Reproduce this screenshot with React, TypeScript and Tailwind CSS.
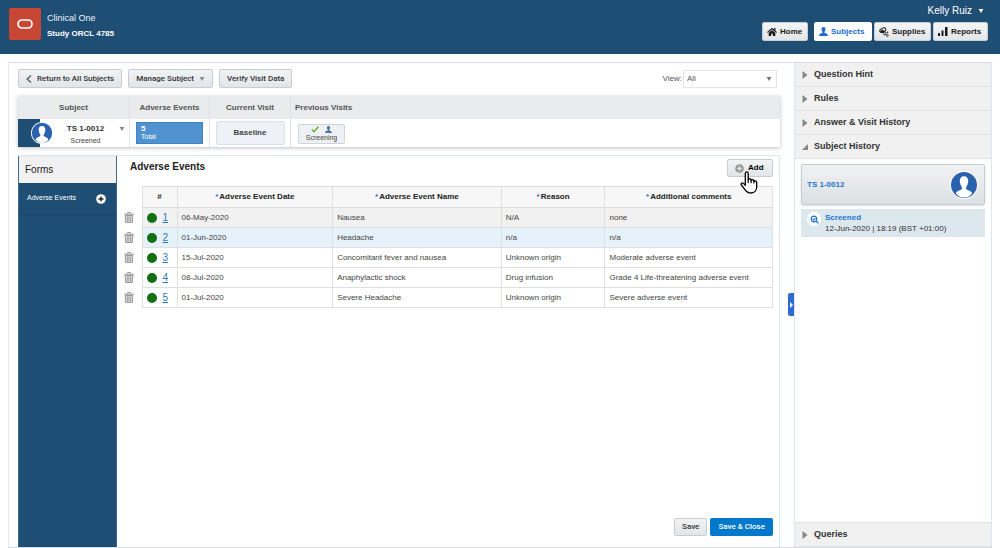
import { useState } from "react";
import { FaHome } from "react-icons/fa";

interface AdverseEvent {
  id: number;
  date: string;
  name: string;
  reason: string;
  comments: string;
}

const events: AdverseEvent[] = [
  { id: 1, date: "06-May-2020", name: "Nausea", reason: "N/A", comments: "none" },
  { id: 2, date: "01-Jun-2020", name: "Headache", reason: "n/a", comments: "n/a" },
  { id: 3, date: "15-Jul-2020", name: "Concomitant fever and nausea", reason: "Unknown origin", comments: "Moderate adverse event" },
  { id: 4, date: "08-Jul-2020", name: "Anaphylactic shock", reason: "Drug infusion", comments: "Grade 4 Life-threatening adverse event" },
  { id: 5, date: "01-Jul-2020", name: "Severe Headache", reason: "Unknown origin", comments: "Severe adverse event" },
];

const columns = ["Adverse Event Date", "Adverse Event Name", "Reason", "Additional comments"];

const greyButton =
  "flex items-center rounded-xs border border-[#c9cdd1] bg-linear-to-b from-[#f1f3f4] to-[#e2e6e9] text-[#333]";

function Caret({ className }: { className: string }) {
  return (
    <svg viewBox="0 0 6 5" className={`h-1 w-[6px] ${className}`} fill="currentColor" aria-hidden="true">
      <path d="M0 0h6L3 5z" />
    </svg>
  );
}

function Avatar({ className }: { className: string }) {
  return (
    <svg viewBox="0 0 28 28" className={className} aria-hidden="true">
      <circle cx="14" cy="14" r="14" fill="#fff" />
      <circle cx="14" cy="14" r="13" fill="#2a62b0" />
      <path
        d="M14 5.200c-2.900 0-4.300 2.100-4.200 4.900 0 1 .1 1.600.4 2.200.3 1.700.9 2.800 1.700 3.600v2c-.6 1.100-4.700 1.500-6.200 4.300C7.800 25 10.700 26.600 14 26.600s6.200-1.600 8.300-4.400c-1.500-2.800-5.600-3.200-6.200-4.300v-2c.8-.8 1.400-1.900 1.700-3.600.3-.6.4-1.200.4-2.200.1-2.800-1.300-4.900-4.200-4.900z"
        fill="#fff"
      />
    </svg>
  );
}

function PersonIcon({ className }: { className: string }) {
  return (
    <svg viewBox="0 0 9 9" className={className} fill="currentColor" aria-hidden="true">
      <path d="M4.500 0C3.200 0 2.500.9 2.500 2.200c0 1 .4 2 1 2.500v1C2.800 6.300.3 6.200.3 8.200V9h8.400v-.8c0-2-2.500-1.900-3.200-2.500v-1c.6-.5 1-1.500 1-2.500C6.500.9 5.800 0 4.500 0z" />
    </svg>
  );
}

function SuppliesIcon() {
  return (
    <svg viewBox="0 0 10 10" className="size-[10px]" fill="none" stroke="#1a1a1a" aria-hidden="true">
      <ellipse cx="3.800" cy="3.200" rx="3.200" ry="2" transform="rotate(-25 3.800 3.200)" strokeWidth="1" />
      <path d="M1 4l3-1.500 1.500 2.200-3.500.8z" fill="#1a1a1a" stroke="none" />
      <circle cx="5.700" cy="6.500" r="1.300" strokeWidth=".9" />
      <circle cx="8.500" cy="5.200" r=".8" fill="#1a1a1a" stroke="none" />
      <circle cx="8.300" cy="8.400" r="1" strokeWidth=".8" />
    </svg>
  );
}

function ReportsIcon() {
  return (
    <svg viewBox="0 0 10 9" className="h-[9px] w-[10px]" fill="#1a1a1a" aria-hidden="true">
      <path d="M0 6h2v3H0zM3.500 3.500h2V9h-2zM7 0h2.500v9H7z" />
    </svg>
  );
}

function PlusCircle({ className, plus }: { className: string; plus: string }) {
  return (
    <svg viewBox="0 0 10 10" className={className} aria-hidden="true">
      <circle cx="5" cy="5" r="4.800" fill="currentColor" />
      <path d="M5 2.500v5M2.500 5h5" stroke={plus} strokeWidth="1.400" />
    </svg>
  );
}

function HandPointer() {
  return (
    <svg viewBox="0 0 18 23" className="absolute top-3 left-[13px] z-10 h-[23px] w-[18px]" aria-hidden="true">
      <path
        d="M5.300 2.600c0-2.200 2.900-2.200 2.900 0v6.200c.1-1.500 2.800-1.500 2.900.2v.7c.2-1.400 2.700-1.300 2.800.2v.8c.3-1.200 2.800-1.100 2.800.8v4.300c0 3.300-2 6.200-5.700 6.200-3.300 0-4.700-1.400-6.200-3.700L1.400 14c-1-1.500.8-2.900 2.100-1.600l1.800 2z"
        fill="#fff"
        stroke="#000"
        strokeWidth="1.300"
        strokeLinejoin="round"
      />
      <path d="M8.200 8.500v3.500M11.100 9v3.200M13.900 10v2.600" stroke="#000" strokeWidth="1.100" />
    </svg>
  );
}

function Header() {
  const navButton = "flex h-[19px] items-center gap-[3px] rounded-xs border px-1 text-[8px] font-bold";
  const idle = "border-[#c9cdd1] bg-linear-to-b from-[#f4f5f6] to-[#e3e6e9] text-[#1a1a1a]";
  return (
    <header className="flex h-[54px] shrink-0 justify-between bg-[#1f4e75] pr-3 pl-[9px] text-white">
      <div className="flex items-start gap-[6px] pt-2">
        <div className="flex size-8 items-center justify-center rounded-xs bg-[#c74634]">
          <svg viewBox="0 0 16 10" className="h-[10px] w-4" fill="none" stroke="#fff" strokeWidth="1.700" aria-hidden="true">
            <rect x="1" y="1" width="14" height="8" rx="4" />
          </svg>
        </div>
        <div className="flex flex-col gap-1 pt-1">
          <span className="text-[9px] leading-3 text-[#eef4f9]">Clinical One</span>
          <span className="text-[8px] leading-3 font-bold">Study ORCL 4785</span>
        </div>
      </div>
      <div className="flex flex-col items-end gap-1 pt-1">
        <button className="mr-1 flex items-center gap-[6px] text-[10px] leading-[14px]">
          Kelly Ruiz
          <Caret className="text-white" />
        </button>
        <nav className="flex gap-[2px]">
          <button className={`${navButton} ${idle} mr-1 w-[46px]`}>
            <FaHome className="size-[10px]" />
            Home
          </button>
          <button className={`${navButton} w-[58px] border-white bg-white text-[#1c6ccc]`}>
            <PersonIcon className="size-[9px]" />
            Subjects
          </button>
          <button className={`${navButton} ${idle} w-[57px]`}>
            <SuppliesIcon />
            Supplies
          </button>
          <button className={`${navButton} ${idle} w-[55px]`}>
            <ReportsIcon />
            Reports
          </button>
        </nav>
      </div>
    </header>
  );
}

function Toolbar() {
  return (
    <div className="flex h-[19px] items-center justify-between text-[8px]">
      <div className="flex gap-[6px] font-[Roboto] font-medium">
        <button className={`${greyButton} h-[19px] gap-[5px] px-[7px]`}>
          <svg viewBox="0 0 6 8" className="h-2 w-[6px]" fill="none" stroke="#666" strokeWidth="1.500" aria-hidden="true">
            <path d="M5 .5L1.200 4 5 7.500" />
          </svg>
          Return to All Subjects
        </button>
        <button className={`${greyButton} h-[19px] gap-[5px] px-[7px]`}>
          Manage Subject
          <Caret className="text-[#888]" />
        </button>
        <button className={`${greyButton} h-[19px] px-[7px]`}>Verify Visit Data</button>
      </div>
      <div className="mr-[3px] flex items-center gap-px text-[#555]">
        <label htmlFor="view">View:</label>
        <div className="relative">
          <select id="view" className="h-[18px] w-[94px] appearance-none border border-[#e3e6e8] bg-white pl-[3px] text-[8px]">
            <option>All</option>
          </select>
          <Caret className="pointer-events-none absolute top-[7px] right-[5px] text-[#777]" />
        </div>
      </div>
    </div>
  );
}

function SubjectBar() {
  const heading = "flex h-[23px] items-center justify-center bg-[#e9ebed] text-[8px] font-bold text-[#555]";
  const body = "flex h-7 items-center";
  return (
    <section className="flex bg-white shadow-[0_1px_4px_rgba(0,0,0,0.25)]">
      <div className="w-[112px] border-r border-[#dfe2e5]">
        <div className={heading}>Subject</div>
        <div className={body}>
          <div className="flex h-7 w-[22px] shrink-0 items-center bg-[#1f4e75] pl-[13px]">
            <Avatar className="size-[22px] shrink-0" />
          </div>
          <div className="ml-3 flex grow flex-col items-center pt-[3px] leading-3">
            <span className="text-[8px] font-bold text-[#333]">TS 1-0012</span>
            <span className="text-[7px] text-[#444]">Screened</span>
          </div>
          <button aria-label="Switch subject" className="mr-1 mb-2">
            <Caret className="text-[#888]" />
          </button>
        </div>
      </div>
      <div className="w-20 border-r border-[#dfe2e5]">
        <div className={heading}>Adverse Events</div>
        <div className={`${body} justify-center`}>
          <button className="flex h-[22px] w-[67px] flex-col justify-center border border-[#4183c0] bg-[#5193d1] pl-1 text-left leading-2 text-white">
            <span className="text-[8px] font-bold">5</span>
            <span className="text-[7px]">Total</span>
          </button>
        </div>
      </div>
      <div className="w-[81px] border-r border-[#dfe2e5]">
        <div className={heading}>Current Visit</div>
        <div className={`${body} justify-center`}>
          <button className="h-6 w-[69px] rounded-xs border border-[#dbe1ea] bg-[#eef2f8] text-[8px] font-bold text-[#444]">Baseline</button>
        </div>
      </div>
      <div className="grow">
        <div className={`${heading} justify-start! pl-1`}>Previous Visits</div>
        <div className={`${body} pt-px pl-[7px]`}>
          <button className="flex h-5 w-[47px] flex-col items-center justify-center gap-px rounded-xs border border-[#cfd5da] bg-[#eef0f3] text-[7px] leading-2 text-[#444]">
            <span className="flex gap-[6px]">
              <svg viewBox="0 0 8 7" className="h-[7px] w-2" fill="none" stroke="#5cb531" strokeWidth="1.400" aria-hidden="true">
                <path d="M.7 3.500L3 5.800 7.400.8" />
              </svg>
              <PersonIcon className="size-[7px] text-[#41769d]" />
            </span>
            Screening
          </button>
        </div>
      </div>
    </section>
  );
}

function EventsTable() {
  return (
    <table className="w-full table-fixed border-collapse text-[8px] text-[#444]">
      <colgroup>
        <col className="w-[18px]" />
        <col className="w-[35px]" />
        <col className="w-[24%]" />
        <col className="w-[26%]" />
        <col className="w-[16%]" />
        <col />
      </colgroup>
      <thead>
        <tr className="h-[21px] text-[#222]">
          <td />
          <th className="border border-[#dfdfdf] bg-[#f7f7f7]">#</th>
          {columns.map((column) => (
            <th key={column} className="border border-[#dfdfdf] bg-[#f7f7f7]">
              <span className="mr-px text-[#2b6fd0]">*</span>
              {column}
            </th>
          ))}
        </tr>
      </thead>
      <tbody>
        {events.map((event) => {
          const fill = event.id === 1 ? "bg-[#f1f1f1]" : event.id === 2 ? "bg-[#e6f2fa]" : "bg-white";
          const cell = `border border-[#dfdfdf] px-1 ${fill}`;
          return (
            <tr key={event.id} className="h-5">
              <td>
                <button aria-label={`Delete event ${event.id}`} className="block">
                  <svg viewBox="0 0 10 11" className="h-[11px] w-[10px]" fill="none" stroke="#999" aria-hidden="true">
                    <path d="M3.500 1.500V.5h3v1M0 2.200h10" />
                    <path d="M1.200 3.500h7.600l-.5 7H1.700z" fill="#d4d4d4" />
                    <path d="M3.500 4.500v5M5 4.500v5M6.500 4.500v5" strokeWidth=".7" />
                  </svg>
                </button>
              </td>
              <td className={cell}>
                <div className="flex items-center gap-[6px]">
                  <span className="size-[10px] rounded-full bg-[#127012]" />
                  <a href={`#event-${event.id}`} className="text-[10px] leading-3 text-[#2a78b8] underline">
                    {event.id}
                  </a>
                </div>
              </td>
              <td className={cell}>{event.date}</td>
              <td className={cell}>{event.name}</td>
              <td className={cell}>{event.reason}</td>
              <td className={cell}>{event.comments}</td>
            </tr>
          );
        })}
      </tbody>
    </table>
  );
}

function Workspace() {
  return (
    <section className="flex grow border-t border-r border-[#dde6ee]">
      <aside className="flex w-[99px] shrink-0 flex-col border-x border-[#3f6a90] bg-[#1f4e75]">
        <h2 className="flex h-[27px] items-center bg-[#f1f1f1] pl-[6px] text-[10px] text-[#222]">Forms</h2>
        <div className="flex h-8 items-center justify-between border-b border-[#1a4467] pr-[10px] pl-2 text-[7px] text-white">
          Adverse Events
          <button aria-label="Add form">
            <PlusCircle className="size-[10px] text-white" plus="#222" />
          </button>
        </div>
      </aside>
      <div className="flex grow flex-col pr-[6px] pb-[11px] pl-[7px]">
        <div className="flex h-[30px] items-start justify-between pt-[3px]">
          <h1 className="pl-[6px] text-[10px] leading-4 font-bold text-[#222]">Adverse Events</h1>
          <div className="relative">
            <button className={`${greyButton} h-[18px] w-[46px] gap-1 pl-[7px] text-[8px] font-bold text-black`}>
              <PlusCircle className="size-[9px] text-[#999]" plus="#e8e8e8" />
              Add
            </button>
            <HandPointer />
          </div>
        </div>
        <EventsTable />
        <div className="mt-auto flex justify-end gap-[3px] font-[Roboto] text-[8px] font-medium">
          <button className={`${greyButton} h-[18px] px-[7px]`}>Save</button>
          <button className="h-[18px] rounded-xs bg-[#0078cc] px-2 text-white">Save &amp; Close</button>
        </div>
      </div>
    </section>
  );
}

function PanelHeading({ title, open, onToggle }: { title: string; open: boolean; onToggle: () => void }) {
  return (
    <button
      onClick={onToggle}
      aria-expanded={open}
      className="flex h-6 w-full shrink-0 items-center gap-[6px] border-b border-[#e2e2e2] bg-[#f1f1f1] pl-[7px] text-[9px] font-bold text-[#333]"
    >
      <svg viewBox="0 0 6 8" className="h-2 w-[6px]" fill="#888" aria-hidden="true">
        {open ? <path d="M6 1v6H0z" /> : <path d="M.5 0L5.500 4l-5 4z" />}
      </svg>
      {title}
    </button>
  );
}

function SidePanel() {
  const [open, setOpen] = useState("Subject History");
  const toggle = (title: string) => setOpen(open === title ? "" : title);

  return (
    <aside className="relative flex w-[198px] shrink-0 flex-col border-x border-[#dde6ee]">
      <button aria-label="Collapse panel" className="absolute top-[230px] -left-[7px] flex h-[23px] w-[6px] items-center justify-center rounded-l-xs bg-[#2d6bd0]">
        <svg viewBox="0 0 3 6" className="h-[6px] w-[3px]" fill="#fff" aria-hidden="true">
          <path d="M0 0l3 3-3 3z" />
        </svg>
      </button>
      {["Question Hint", "Rules", "Answer & Visit History", "Subject History"].map((title) => (
        <PanelHeading key={title} title={title} open={open === title} onToggle={() => toggle(title)} />
      ))}
      {open === "Subject History" && (
        <div className="flex flex-col gap-1 px-[6px] pt-[5px] text-[8px]">
          <div className="flex h-[41px] items-center justify-between rounded-xs border border-[#c3cdd5] bg-linear-to-b from-[#f0f1f3] to-[#dde1e4] pr-[6px] pl-[5px] shadow-sm">
            <a href="#subject" className="font-bold text-[#1c74d0]">TS 1-0012</a>
            <Avatar className="size-7" />
          </div>
          <div className="flex h-7 items-start gap-1 bg-[#dde7ee] pt-[3px] pl-[6px] leading-[11px] text-[#333]">
            <span className="flex size-[14px] items-center justify-center rounded-full bg-white">
              <svg viewBox="0 0 9 9" className="size-[9px]" fill="none" stroke="#1c6ccc" strokeWidth="1.200" aria-hidden="true">
                <circle cx="4" cy="4" r="2.800" />
                <path d="M6 6l2.500 2.300M2.800 4l1 1 1.600-1.700" />
              </svg>
            </span>
            <div className="flex flex-col">
              <span className="font-bold text-[#1c74d0]">Screened</span>
              <span>12-Jun-2020 | 18:19 (BST +01:00)</span>
            </div>
          </div>
        </div>
      )}
      <div className="mt-auto border-t border-[#e2e2e2]">
        <PanelHeading title="Queries" open={open === "Queries"} onToggle={() => toggle("Queries")} />
      </div>
    </aside>
  );
}

export default function App() {
  return (
    <div className="flex min-h-screen flex-col bg-white font-['Liberation_Sans',Arial,sans-serif]">
      <Header />
      <div className="mt-2 mr-2 ml-2 flex grow border-t border-b border-[#d5dde5]">
        <main className="flex grow flex-col border-l border-[#e3e8ee] pt-[6px] pr-[14px] pl-[9px]">
          <Toolbar />
          <div className="mt-2 mb-2">
            <SubjectBar />
          </div>
          <Workspace />
        </main>
        <SidePanel />
      </div>
    </div>
  );
}
